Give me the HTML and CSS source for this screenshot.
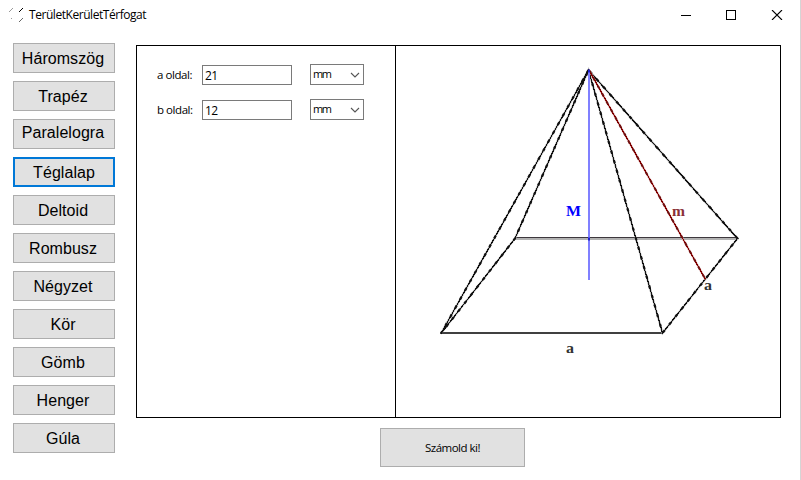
FILE: index.html
```
<!DOCTYPE html>
<html lang="hu">
<head>
<meta charset="utf-8">
<title>TerületKerületTérfogat</title>
<link rel="stylesheet" href="styles.css">
</head>
<body>
<div class="window">
  <header class="titlebar">
    <svg class="app-icon" width="16" height="16" viewBox="0 0 16 16" fill="none" stroke="#999">
      <path d="M0 5L4 1M2 11L3 12"/><path d="M10 5L14 1" stroke="#000"/><path d="M10 15L14 11" stroke="#666"/>
    </svg>
    <h1 class="title">TerületKerületTérfogat</h1>
    <svg class="controls" width="102" height="10" viewBox="0 0 102 10" fill="none" stroke="#000">
      <path d="M0 5.500H10"/><rect x="45.500" y=".5" width="9" height="9"/><path d="M91 0L101 10M101 0L91 10" stroke-width="1.100"/>
    </svg>
  </header>
  <main class="content">
    <nav class="shapes">
      <button>Háromszög</button>
      <button>Trapéz</button>
      <button class="clipped">Paralelogra</button>
      <button class="active">Téglalap</button>
      <button>Deltoid</button>
      <button>Rombusz</button>
      <button>Négyzet</button>
      <button>Kör</button>
      <button>Gömb</button>
      <button>Henger</button>
      <button>Gúla</button>
    </nav>
    <section class="work">
      <div class="panel">
        <div class="fields">
          <div class="field">
            <label for="a">a oldal:</label><input id="a" value="21">
            <div class="unit"><span>mm</span><svg width="10" height="6" viewBox="0 0 10 6"><path d="M1 1L5 5L9 1" fill="none" stroke="#555" stroke-width="1.100"/></svg></div>
          </div>
          <div class="field">
            <label for="b">b oldal:</label><input id="b" value="12">
            <div class="unit"><span>mm</span><svg width="10" height="6" viewBox="0 0 10 6"><path d="M1 1L5 5L9 1" fill="none" stroke="#555" stroke-width="1.100"/></svg></div>
          </div>
        </div>
        <svg class="figure" width="384" height="371" viewBox="396 46 384 371" fill="none">
          <path d="M514 238.500H738" stroke="#b2b2b2"/>
          <path d="M514 237.500H738" stroke="#3d383d"/>
          <path d="M514 239.500H738" stroke="#b2b2b2" stroke-width="1"/>
          <path d="M440 333H663" stroke="#404040" stroke-width="2"/>
          <path class="edges-soft" d="M588.500 70L441 333.500L515 238.500L588.500 70L662.500 333L737.500 238.500L588.500 70"/>
          <path class="edges" d="M588.500 70L441 333.500L515 238.500L588.500 70L662.500 333L737.500 238.500L588.500 70"/>
          <path class="edges-knots" d="M588.500 70L441 333.500L515 238.500L588.500 70L662.500 333L737.500 238.500L588.500 70"/>
          <path class="slant-soft" d="M589 70L705.500 279.500"/>
          <path class="slant" d="M589 70L705.500 279.500"/>
          <path class="slant-knots" d="M589 70L705.500 279.500"/>
          <path d="M589 70V280" stroke="#8080ff" stroke-width="2"/>
          <path d="M588 71H590M588 239H590" stroke="#2020d0" stroke-width="3"/>
          <g class="marks">
            <text x="566" y="216" textLength="15" lengthAdjust="spacingAndGlyphs" fill="#00f">M</text>
            <text x="672" y="216" textLength="13" lengthAdjust="spacingAndGlyphs" fill="#8b3038">m</text>
            <text x="704" y="290" textLength="8" lengthAdjust="spacingAndGlyphs" fill="#333">a</text>
            <text x="566" y="353" textLength="8" lengthAdjust="spacingAndGlyphs" fill="#333">a</text>
          </g>
        </svg>
      </div>
      <button class="calculate">Számold ki!</button>
    </section>
  </main>
</div>
</body>
</html>
```
FILE: styles.css
```
* { box-sizing: border-box; }
body { margin: 0; background: #fff; color: #000; font-family: "Open Sans", "Noto Sans", sans-serif; }
.window { width: 801px; height: 480px; border-right: 1px solid #d5d5d5; overflow: hidden; }
.titlebar { display: flex; align-items: center; height: 29px; padding: 0 17px 0 9px; }
.title { margin: 1px 0 0 4px; font-size: 12px; font-weight: 400; letter-spacing: -0.45px; line-height: 16px; }
.controls { margin-left: auto; }
.content { display: flex; padding: 14px 19px 0 13px; }
.shapes { display: flex; flex-direction: column; gap: 8px; width: 102px; }
button { font-family: "Liberation Sans", Arial, sans-serif; color: #000; background: #e1e1e1; border: 1px solid #adadad; border-radius: 0; padding: 0; }
.shapes button { height: 30px; font-size: 16px; line-height: 18px; padding: 2px 2px 0 0; letter-spacing: .05px; }
.shapes .clipped { padding: 0 2px 2px 0; }
.shapes .active { border: 2px solid #0078d7; padding-right: 0; }
.work { display: flex; flex-direction: column; align-items: flex-start; margin: 2px 0 0 21px; }
.panel { display: flex; width: 645px; height: 373px; border: 1px solid #000; }
.fields { display: flex; flex-direction: column; gap: 14px; width: 259px; padding: 18px 0 0 20px; border-right: 1px solid #000; }
.field { display: flex; align-items: flex-end; height: 21px; font-size: 11.500px; }
.field label { width: 45px; line-height: 20px; letter-spacing: -.45px; white-space: nowrap; }
.field input { width: 90px; height: 20px; margin: 0; padding: 0 2px; border: 1px solid #7a7a7a; font: 12px/18px "Open Sans", sans-serif; letter-spacing: -.5px; }
.unit { display: flex; align-items: center; justify-content: space-between; width: 54px; height: 21px; margin-left: 18px; padding: 0 3px 0 2px; border: 1px solid #7a7a7a; font-size: 11px; letter-spacing: -1.500px; }
.unit span { position: relative; top: -1px; }
.figure { display: block; }
.edges { stroke: #111; stroke-width: 1.100; shape-rendering: crispEdges; }
.edges-soft { stroke: #aaa; stroke-width: 2; }
.edges-knots { stroke: #111; stroke-width: 2.200; stroke-dasharray: 3 7; }
.slant { stroke: #800000; stroke-width: 1.200; shape-rendering: crispEdges; }
.slant-soft { stroke: #c99; stroke-width: 2; }
.slant-knots { stroke: #701010; stroke-width: 2; stroke-dasharray: 3 6; }
.marks { font: bold 15px "Liberation Serif", serif; }
.calculate { width: 145px; height: 39px; margin: 10px 0 0 244px; font: 11.500px "Open Sans", sans-serif; letter-spacing: -.5px; }
```
